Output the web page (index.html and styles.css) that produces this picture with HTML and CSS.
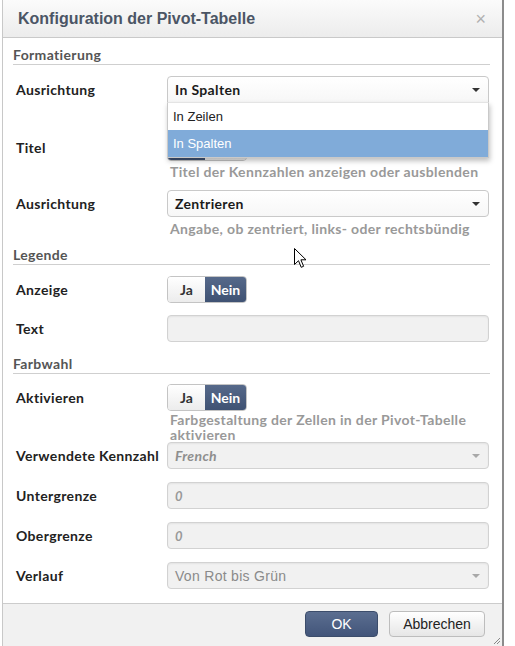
FILE: index.html
```html
<!DOCTYPE html>
<html lang="de">
<head>
<meta charset="utf-8">
<title>Konfiguration der Pivot-Tabelle</title>
<link rel="stylesheet" href="styles.css">
</head>
<body>
<div class="dialog">
  <div class="dialog-header">
    <span class="dialog-title">Konfiguration der Pivot-Tabelle</span>
    <span class="dialog-close">×</span>
  </div>
  <div class="dialog-body">
    <div class="section-title">Formatierung</div>

    <div class="row row-first">
      <div class="label">Ausrichtung</div>
      <div class="control">
        <div class="select open">
          <span class="select-value">In Spalten</span>
          <span class="caret"></span>
        </div>
        <ul class="dropdown">
          <li class="option">In Zeilen</li>
          <li class="option selected">In Spalten</li>
        </ul>
      </div>
    </div>

    <div class="row row-titel">
      <div class="label">Titel</div>
      <div class="control">
        <div class="toggle"><span class="tg tg-on"></span><span class="tg"></span></div>
        <div class="help">Titel der Kennzahlen anzeigen oder ausblenden</div>
      </div>
    </div>

    <div class="row">
      <div class="label">Ausrichtung</div>
      <div class="control">
        <div class="select">
          <span class="select-value">Zentrieren</span>
          <span class="caret"></span>
        </div>
        <div class="help help-gap">Angabe, ob zentriert, links- oder rechtsbündig</div>
      </div>
    </div>

    <div class="section-title section-legende">Legende</div>

    <div class="row">
      <div class="label">Anzeige</div>
      <div class="control">
        <div class="toggle"><span class="tg">Ja</span><span class="tg tg-on">Nein</span></div>
      </div>
    </div>

    <div class="row row-12">
      <div class="label">Text</div>
      <div class="control">
        <div class="input disabled"></div>
      </div>
    </div>

    <div class="section-title section-farbwahl">Farbwahl</div>

    <div class="row row-10">
      <div class="label">Aktivieren</div>
      <div class="control">
        <div class="toggle"><span class="tg">Ja</span><span class="tg tg-on">Nein</span></div>
        <div class="help help-tight">Farbgestaltung der Zellen in der Pivot-Tabelle aktivieren</div>
      </div>
    </div>

    <div class="row row-0">
      <div class="label">Verwendete Kennzahl</div>
      <div class="control">
        <div class="select disabled">
          <span class="select-value placeholder">French</span>
          <span class="caret"></span>
        </div>
      </div>
    </div>

    <div class="row row-13">
      <div class="label">Untergrenze</div>
      <div class="control">
        <div class="input disabled"><span class="placeholder">0</span></div>
      </div>
    </div>

    <div class="row row-13">
      <div class="label">Obergrenze</div>
      <div class="control">
        <div class="input disabled"><span class="placeholder">0</span></div>
      </div>
    </div>

    <div class="row row-13">
      <div class="label">Verlauf</div>
      <div class="control">
        <div class="select disabled">
          <span class="select-value plain">Von Rot bis Grün</span>
          <span class="caret"></span>
        </div>
      </div>
    </div>
  </div>
  <div class="dialog-footer">
    <button class="btn btn-primary">OK</button>
    <button class="btn btn-default">Abbrechen</button>
  </div>
  <svg class="grip" width="8" height="8" viewBox="0 0 8 8">
    <path d="M7 1 L1 7 M7 4 L4 7 M7 7 L7 7" stroke="#888" stroke-width="1" fill="none"/>
  </svg>
</div>
<svg class="cursor" width="13" height="21" viewBox="0 0 13 21">
  <path d="M0.5 0.5 L0.5 16.5 L4.5 12.7 L7.2 19.3 L9.6 18.3 L6.9 11.8 L12 11.8 Z" fill="#fff" stroke="#000" stroke-width="1" stroke-linejoin="miter"/>
</svg>
</body>
</html>
```
FILE: styles.css
```css
* { box-sizing: border-box; }
html, body { margin: 0; padding: 0; background: #fff; }
body {
  width: 515px;
  height: 646px;
  overflow: hidden;
  position: relative;
  font-family: "Lato", "Open Sans", sans-serif;
  letter-spacing: 0.35px;
}

.dialog {
  position: relative;
  margin-left: 2px;
  width: 502px;
  height: 646px;
  border-left: 1px solid #c8c8c8;
  border-right: 2px solid #8c8c8c;
  background: #fff;
  display: flex;
  flex-direction: column;
}

.dialog-header {
  height: 38px;
  flex: none;
  border-bottom: 1px solid #c9c9c9;
  background: linear-gradient(#fbfbfb, #ececec);
  display: flex;
  align-items: center;
  justify-content: space-between;
  padding: 0 16px 0 15px;
  letter-spacing: 0;
}
.dialog-title {
  font-family: "Liberation Sans", Arial, sans-serif;
  font-weight: bold;
  font-size: 16px;
  color: #4b5565;
}
.dialog-close {
  font-family: "Liberation Sans", Arial, sans-serif;
  font-size: 18px;
  color: #b0b0b0;
  line-height: 1;
}

.dialog-body {
  flex: 1;
  padding: 8px 12px 0 10px;
}

.section-title {
  font-weight: bold;
  font-size: 14px;
  line-height: 18px;
  color: #555;
  border-bottom: 1px solid #cfcfcf;
}
.section-legende { margin-top: 10px; }
.section-farbwahl { margin-top: 13px; }

.row {
  display: grid;
  grid-template-columns: 154px 322px;
  margin-top: 11px;
}
.row-first { margin-top: 11px; }
.row-titel { margin-top: 31px; }
.row-12 { margin-top: 12px; }
.row-10 { margin-top: 10px; }
.row-0 { margin-top: 0; }
.row-13 { margin-top: 13px; }

.label {
  height: 27px;
  display: flex;
  align-items: center;
  padding-left: 3px;
  font-weight: bold;
  font-size: 14px;
  color: #222;
  white-space: nowrap;
}

.control { position: relative; }

.select, .input {
  height: 27px;
  border: 1px solid #c9c9c9;
  border-radius: 4px;
  display: flex;
  align-items: center;
  padding: 0 8px 0 7px;
}
.select {
  background: linear-gradient(#ffffff, #f7f7f7);
  justify-content: space-between;
}
.select.open {
  border-bottom-left-radius: 0;
  border-bottom-right-radius: 0;
}
.select-value {
  font-weight: bold;
  font-size: 14px;
  color: #1a1a1a;
}
.caret {
  width: 0;
  height: 0;
  border-left: 4px solid transparent;
  border-right: 4px solid transparent;
  border-top: 4px solid #333;
}
.select.disabled, .input.disabled {
  background: #f1f1f1;
  border-color: #d2d2d2;
  box-shadow: inset 0 1px 2px rgba(0,0,0,0.06);
}
.select.disabled .caret { border-top-color: #a8a8a8; }
.placeholder {
  font-weight: bold;
  font-style: italic;
  font-size: 14px;
  color: #8e8e8e;
}
.input .placeholder { font-size: 13px; color: #999; }
.select-value.plain {
  font-family: "Liberation Sans", Arial, sans-serif;
  font-weight: normal;
  font-size: 14px;
  letter-spacing: 0.3px;
  color: #8a8a8a;
}

.dropdown {
  position: absolute;
  left: 0;
  top: 26px;
  width: 322px;
  margin: 0;
  padding: 0;
  list-style: none;
  background: #fff;
  border: 1px solid #c9c9c9;
  border-top-color: #e4e4e4;
  box-shadow: 1px 3px 5px rgba(0,0,0,0.25);
  z-index: 5;
}
.option {
  height: 27px;
  line-height: 27px;
  padding-left: 5px;
  font-family: "Liberation Sans", Arial, sans-serif;
  font-size: 13px;
  letter-spacing: 0;
  color: #222;
}
.option.selected {
  background: #80abd9;
  color: #fff;
}

.toggle {
  display: flex;
  width: max-content;
  height: 27px;
  border-radius: 4px;
  overflow: hidden;
  border: 1px solid #c4c4c4;
}
.tg {
  display: flex;
  align-items: center;
  justify-content: center;
  font-weight: bold;
  font-size: 14px;
  letter-spacing: 0;
  color: #333;
  background: linear-gradient(#ffffff, #ececec);
  width: 37px;
}
.tg + .tg { width: 41px; }
.tg-on {
  background: linear-gradient(#56698a, #3f5273);
  color: #fff;
}

.help {
  margin-top: 3px;
  padding-left: 3px;
  font-weight: bold;
  font-size: 14px;
  line-height: 15px;
  color: #999;
}
.help-gap { margin-top: 4px; }
.help-tight { margin-top: 1px; }

.dialog-footer {
  flex: none;
  height: 43px;
  border-top: 1px solid #cccccc;
  background: #f1f1f1;
  display: flex;
  justify-content: flex-end;
  align-items: flex-start;
  gap: 11px;
  padding: 7px 17px 0 0;
  margin-top: auto;
}
.btn {
  height: 26px;
  border-radius: 4px;
  font-family: "Liberation Sans", Arial, sans-serif;
  font-size: 14px;
  letter-spacing: 0;
  padding: 0;
  cursor: pointer;
}
.btn-primary {
  width: 73px;
  border: 1px solid #3c4d6b;
  background: linear-gradient(#5b6e90, #42557a);
  color: #fff;
}
.btn-default {
  width: 96px;
  border: 1px solid #bdbdbd;
  background: linear-gradient(#ffffff, #e6e6e6);
  color: #222;
}

.grip {
  position: absolute;
  right: 1px;
  bottom: 1px;
}

.cursor {
  position: absolute;
  left: 294px;
  top: 248px;
  z-index: 10;
}
```
